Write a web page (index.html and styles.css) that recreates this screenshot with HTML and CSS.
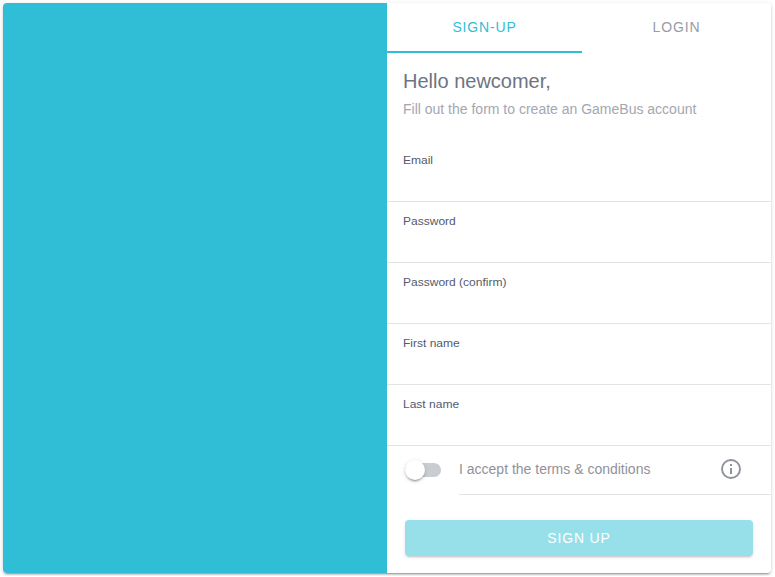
FILE: index.html
```html
<!DOCTYPE html>
<html lang="en">
<head>
<meta charset="utf-8">
<title>GameBus</title>
<link rel="stylesheet" href="styles.css">
</head>
<body>
<main class="card">
  <div class="cover"></div>
  <section class="panel">
    <nav class="tabs">
      <a class="tab active">SIGN-UP</a>
      <a class="tab">LOGIN</a>
    </nav>
    <header class="intro">
      <h1>Hello newcomer,</h1>
      <p>Fill out the form to create an GameBus account</p>
    </header>
    <form>
      <label class="field"><span>Email</span></label>
      <label class="field"><span>Password</span></label>
      <label class="field"><span>Password (confirm)</span></label>
      <label class="field"><span>First name</span></label>
      <label class="field"><span>Last name</span></label>
      <div class="terms">
        <span class="toggle"><span class="knob"></span></span>
        <div class="terms-body">
          <span>I accept the terms &amp; conditions</span>
          <svg class="info" viewBox="0 0 20 20"><circle cx="10" cy="10" r="9" fill="none" stroke="currentColor" stroke-width="1.9"/><path d="M9 5h2v2H9zM9 9h2v6H9z" fill="currentColor"/></svg>
        </div>
      </div>
      <button class="submit" type="button" disabled>SIGN UP</button>
    </form>
  </section>
</main>
</body>
</html>
```

FILE: styles.css
```css
* { box-sizing: border-box; }
body {
  margin: 0;
  padding: 3px;
  background: #fff;
  font-family: "Liberation Sans", Arial, sans-serif;
}
.card {
  display: flex;
  width: 768px;
  height: 570px;
  border-radius: 4px;
  overflow: hidden;
  background: #fff;
  box-shadow: 0 3px 1px -2px rgba(0,0,0,.2), 0 2px 2px rgba(0,0,0,.14), 0 1px 5px rgba(0,0,0,.12);
}
.cover { width: 384px; background: #2fbed5; }
.panel { width: 384px; }
.tabs { display: flex; height: 50px; }
.tab {
  width: 195px;
  height: 50px;
  line-height: 48px;
  text-align: center;
  font-size: 14px;
  letter-spacing: .84px;
  color: #989ca6;
}
.tab:last-child { width: 189px; }
.tab.active { color: #2fbed5; border-bottom: 2px solid #2fbed5; }
.intro { padding: 16px 16px 0; height: 88px; }
h1 { margin: 0; font-size: 20px; line-height: 24px; font-weight: 400; color: #6e7482; }
p { margin: 8px 0 0; font-size: 14px; line-height: 16px; color: #a4a7af; }
.field {
  display: block;
  height: 61px;
  padding: 12px 16px 0;
  border-bottom: 1px solid #e2e3e5;
  font-size: 11.7px;
  line-height: 14px;
  color: #555a6e;
}
.field span {
  display: block;
  transform: scaleX(1.028);
  transform-origin: 0 0;
}
.terms { display: flex; height: 49px; padding-left: 18px; }
.toggle {
  display: flex;
  align-items: center;
  width: 36px;
  height: 14px;
  margin: 17px 18px 0 0;
  border-radius: 7px;
  background: #c9ccd1;
}
.knob {
  flex: none;
  width: 20px;
  height: 20px;
  border-radius: 50%;
  background: #fff;
  box-shadow: 0 3px 1px -2px rgba(0,0,0,.2), 0 2px 2px rgba(0,0,0,.14), 0 1px 5px rgba(0,0,0,.12);
}
.terms-body {
  flex: 1;
  display: flex;
  justify-content: space-between;
  padding: 14px 30px 0 0;
  border-bottom: 1px solid #e2e3e5;
  font-size: 14px;
  line-height: 18px;
  color: #8f929b;
}
.info { width: 20px; height: 20px; margin-top: -1px; color: #8f929b; }
.submit {
  display: block;
  width: 348px;
  height: 36px;
  margin: 25px 18px 0;
  padding: 0;
  border: 0;
  border-radius: 4px;
  background: #97dfe9;
  color: #fff;
  font: 14px "Liberation Sans", Arial, sans-serif;
  letter-spacing: .84px;
  box-shadow: 0 3px 1px -2px rgba(0,0,0,.1), 0 2px 2px rgba(0,0,0,.07), 0 1px 5px rgba(0,0,0,.06);
}
```
